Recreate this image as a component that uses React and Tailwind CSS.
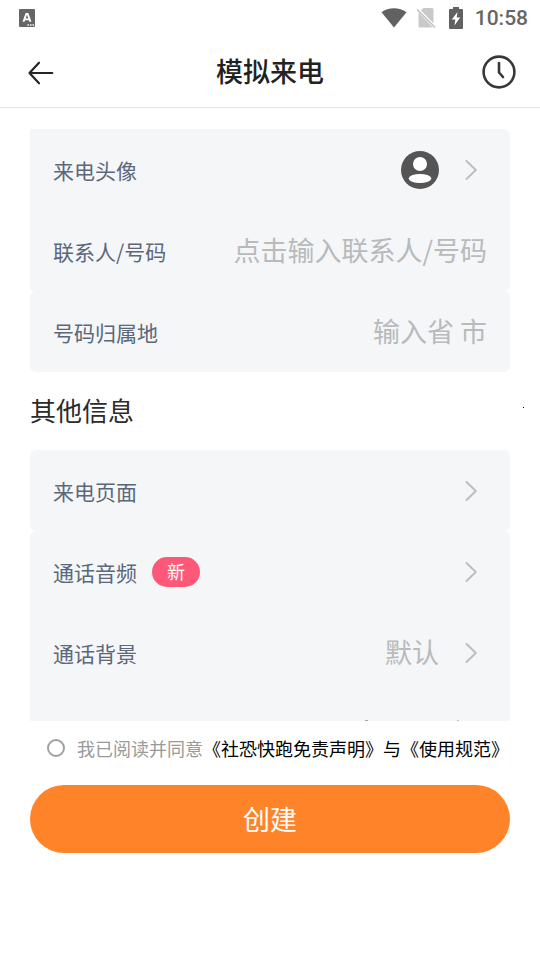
import React from "react";

function Chevron() {
  return (
    <span className="flex w-8 shrink-0 justify-center">
      <svg width="12" height="20" viewBox="0 0 12 20" fill="none" stroke="#bdbfc2" strokeWidth="2" strokeLinecap="round" strokeLinejoin="round" aria-hidden="true">
        <path d="M1.5 1 10.800 10 1.500 19" />
      </svg>
    </span>
  );
}

const rowClass = "flex h-[81px] w-full items-center px-[23px] text-left text-[21px]";
const labelClass = "shrink-0 pt-0.5 text-[#5b677a]";

function LinkRow({ label, badge, value, children }) {
  return (
    <button type="button" className={rowClass}>
      <span className={labelClass}>{label}</span>
      {badge && (
        <span className="ml-[15px] flex h-[30px] w-12 items-center justify-center rounded-full bg-[#fd5878] text-[18px] text-white">
          {badge}
        </span>
      )}
      <span className="ml-auto flex items-center gap-4">
        {children}
        {value && <span className="text-[27px] text-[#b8babc]">{value}</span>}
        <Chevron />
      </span>
    </button>
  );
}

function InputRow({ id, label, placeholder }) {
  return (
    <div className={rowClass}>
      <label htmlFor={id} className={labelClass}>{label}</label>
      <input
        id={id}
        type="text"
        placeholder={placeholder}
        className="min-w-0 flex-1 bg-transparent text-right text-[27px] text-[#333333] outline-none placeholder:text-[#b8babc]"
      />
    </div>
  );
}

function StatusBar() {
  return (
    <div className="flex h-9 items-center pr-3 pl-[19px] text-[#666666]">
      <svg width="16" height="18" viewBox="0 0 16 18" aria-hidden="true">
        <rect width="16" height="18" rx="1" fill="#666666" />
        <path d="M4.500 12.800 7.300 5h1.400l2.800 7.800M5.800 10.400h4.400" fill="none" stroke="#fff" strokeWidth="1.9" />
        <path d="M8.500 16h1.500m1 0h1.500m1 0H15" stroke="#fff" strokeWidth="1.4" />
      </svg>
      <div className="ml-auto flex items-center">
        <svg width="26" height="20" viewBox="0 0 26 20" aria-hidden="true">
          <path d="M.5 4.200C7.500-1.200 18.500-1.200 25.500 4.200L13 19.500Z" fill="#616161" />
        </svg>
        <svg className="ml-[9px]" width="20" height="20" viewBox="0 0 20 20" aria-hidden="true">
          <path d="M7.500 0H16q1.500 0 1.500 1.500V15.500L5 2.500ZM2.500 4.500 17 19.500H4q-1.500 0-1.500-1.500Z" fill="#c9c9c9" />
          <path d="M1 1.500 19 19.500" stroke="#bdbdbd" strokeWidth="1.400" />
        </svg>
        <svg className="ml-3" width="16" height="22" viewBox="0 0 16 22" aria-hidden="true">
          <path d="M5 0h6v2h3q1 0 1 1v18q0 1-1 1H2q-1 0-1-1V3q0-1 1-1h3Z" fill="#616161" />
          <path d="M9.500 5 3.800 12.500H7.300L6.500 18.500 12.200 10.500H8.700Z" fill="#fff" />
        </svg>
        <span className="ml-[11px] pt-0.5 font-['Roboto',sans-serif] text-[21px] font-medium">10:58</span>
      </div>
    </div>
  );
}

export default function App() {
  return (
    <main className="min-h-screen bg-white font-['Noto_Sans_CJK_SC',sans-serif]">
      <StatusBar />
      <header className="grid h-[72px] grid-cols-[1fr_auto_1fr] items-center border-b border-[#e6e6e6] px-6">
        <button type="button" aria-label="返回" className="ml-1 justify-self-start pt-0.5">
          <svg width="26" height="24" viewBox="0 0 26 24" fill="none" stroke="#252525" strokeWidth="2.200" strokeLinecap="round" strokeLinejoin="round">
            <path d="M11 1.700 1.500 12 11 22.300M1.500 12H24.300" />
          </svg>
        </button>
        <h1 className="text-[27px] font-medium text-[#222222]">模拟来电</h1>
        <button type="button" aria-label="历史记录" className="justify-self-end">
          <svg width="34" height="34" viewBox="0 0 34 34" fill="none" stroke="#383838" strokeWidth="2.600" strokeLinecap="round" strokeLinejoin="round">
            <circle cx="17" cy="17" r="15.400" />
            <path d="M17 8v9.500l4 4.500" />
          </svg>
        </button>
      </header>

      <div className="px-[30px] pt-[21px]">
        <section>
          <div className="rounded-r-md bg-[#f4f6f8]">
            <LinkRow label="来电头像">
              <svg width="38" height="38" viewBox="0 0 38 38" aria-hidden="true">
                <circle cx="19" cy="19" r="19" fill="#555555" />
                <circle cx="19" cy="13" r="7" fill="#fff" />
                <ellipse cx="19" cy="27.500" rx="11.300" ry="4.600" fill="#fff" />
              </svg>
            </LinkRow>
            <InputRow id="contact" label="联系人/号码" placeholder="点击输入联系人/号码" />
          </div>
          <div className="rounded-md bg-[#f4f6f8]">
            <InputRow id="region" label="号码归属地" placeholder="输入省 市" />
          </div>
        </section>

        <div className="flex h-[78px] items-center justify-between pb-1">
          <h2 className="text-[26px] text-[#2b2b2b]">其他信息</h2>
          <span className="-mr-3.5 mb-1 h-px w-px bg-black" />
        </div>

        <section>
          <div className="rounded-md bg-[#f4f6f8]">
            <LinkRow label="来电页面" />
          </div>
          <div className="rounded-t-md bg-[#f4f6f8]">
            <LinkRow label="通话音频" badge="新" />
            <LinkRow label="通话背景" value="默认" />
            <div className="flex h-7 items-end justify-end gap-[89px] pr-[51px]">
              <span className="h-px w-[3px] bg-[#a5a7a9]" />
              <span className="h-px w-0.5 bg-[#c0c2c4]" />
            </div>
          </div>
        </section>

        <footer>
          <div className="flex h-16 items-center pb-2.5 pl-[17px] text-[18px] whitespace-nowrap">
            <input
              id="agree"
              type="checkbox"
              className="size-[18px] shrink-0 appearance-none rounded-full border-2 border-[#a0a0a0] checked:bg-[#ff8429]"
            />
            <label htmlFor="agree" className="pl-3 text-[#999999]">我已阅读并同意</label>
            <a href="#disclaimer" className="text-black">《社恐快跑免责声明》</a>
            <span className="text-black">与</span>
            <a href="#rules" className="text-black">《使用规范》</a>
          </div>
          <button type="button" className="flex h-[68px] w-full items-center justify-center rounded-full bg-[#ff8429] text-[27px] text-white">
            创建
          </button>
        </footer>
      </div>
    </main>
  );
}
